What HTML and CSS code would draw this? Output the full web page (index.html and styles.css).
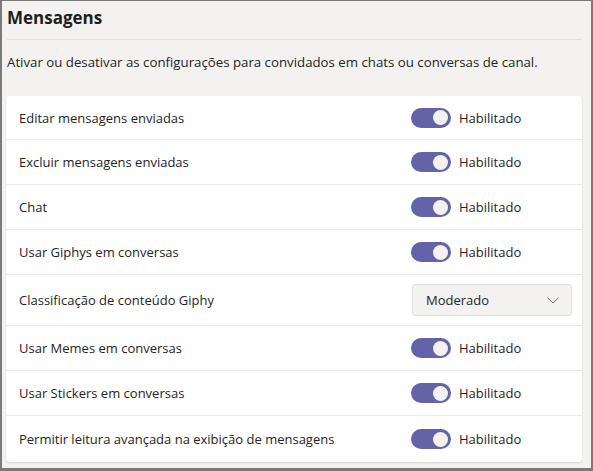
FILE: index.html
```html
<!DOCTYPE html>
<html lang="pt">
<head>
<meta charset="utf-8">
<link rel="stylesheet" href="styles.css">
</head>
<body>
<div class="frame">
  <h1 class="title">Mensagens</h1>
  <p class="desc">Ativar ou desativar as configurações para convidados em chats ou conversas de canal.</p>
  <div class="card">
    <div class="row"><span class="label">Editar mensagens enviadas</span><span class="ctl"><span class="toggle"><span class="knob"></span></span><span class="state">Habilitado</span></span></div>
    <div class="row"><span class="label">Excluir mensagens enviadas</span><span class="ctl"><span class="toggle"><span class="knob"></span></span><span class="state">Habilitado</span></span></div>
    <div class="row"><span class="label">Chat</span><span class="ctl"><span class="toggle"><span class="knob"></span></span><span class="state">Habilitado</span></span></div>
    <div class="row"><span class="label">Usar Giphys em conversas</span><span class="ctl"><span class="toggle"><span class="knob"></span></span><span class="state">Habilitado</span></span></div>
    <div class="row row-select"><span class="label">Classificação de conteúdo Giphy</span><span class="ctl"><span class="select"><span>Moderado</span><svg class="chev" width="12" height="7" viewBox="0 0 12 7"><path d="M0.5 0.8 L6 6 L11.5 0.8" fill="none" stroke="#6e6e6e" stroke-width="1"/></svg></span></span></div>
    <div class="row"><span class="label">Usar Memes em conversas</span><span class="ctl"><span class="toggle"><span class="knob"></span></span><span class="state">Habilitado</span></span></div>
    <div class="row"><span class="label">Usar Stickers em conversas</span><span class="ctl"><span class="toggle"><span class="knob"></span></span><span class="state">Habilitado</span></span></div>
    <div class="row"><span class="label">Permitir leitura avançada na exibição de mensagens</span><span class="ctl"><span class="toggle"><span class="knob"></span></span><span class="state">Habilitado</span></span></div>
  </div>
</div>
</body>
</html>
```
FILE: styles.css
```css
* { box-sizing: border-box; }
html, body { margin: 0; padding: 0; }
body {
  font-family: "Open Sans", "Noto Sans", sans-serif;
  color: #252423;
  background: #f3f2f1;
}
.frame {
  width: 593px;
  height: 471px;
  background: #f3f2f1;
  border-top: 1px solid #7a7a7a;
  border-left: 2px solid #7a7a7a;
  border-right: 2px solid #7a7a7a;
  border-bottom: 3px solid #7a7a7a;
  padding: 0 9px 0 4px;
  overflow: hidden;
}
.title {
  margin: 0 0 0 1px;
  font-size: 17px;
  font-weight: 700;
  line-height: 22px;
  padding-top: 6px;
  padding-bottom: 10px;
  border-bottom: 1px solid #e1dfdd;
  color: #201f1e;
}
.desc {
  margin: 0 0 0 1px;
  padding-top: 13px;
  font-size: 13.25px;
  line-height: 18px;
  height: 56px;
  color: #252423;
}
.card {
  background: #fff;
  border-radius: 4px;
  box-shadow: 0 1px 2px rgba(0,0,0,0.12);
  padding: 0 10px 0 13px;
}
.row {
  display: grid;
  grid-template-columns: 1fr 160px;
  align-items: center;
  height: 45px;
  border-bottom: 1px solid #edebe9;
  font-size: 13px;
  margin-right: -10px;
  padding-right: 10px;
  margin-left: -13px;
  padding-left: 13px;
}
.row:first-child { height: 44px; }
.row:last-child { border-bottom: none; height: 46px; }
.row-select { height: 51px; }
.ctl {
  display: flex;
  align-items: center;
  margin-left: -1px;
}
.toggle {
  width: 40px;
  height: 20px;
  border-radius: 10px;
  background: #6264a7;
  display: flex;
  align-items: center;
  justify-content: flex-end;
  padding-right: 3px;
}
.knob {
  width: 15px;
  height: 15px;
  border-radius: 50%;
  background: #f3f2f1;
}
.state { margin-left: 8px; }
.select {
  width: 160px;
  height: 32px;
  margin-left: 1px;
  background: #f3f2f1;
  border: 1px solid #e1dfdd;
  border-radius: 3px;
  display: flex;
  align-items: center;
  justify-content: space-between;
  padding: 0 12px 0 13px;
}
.chev { display: block; }
```
